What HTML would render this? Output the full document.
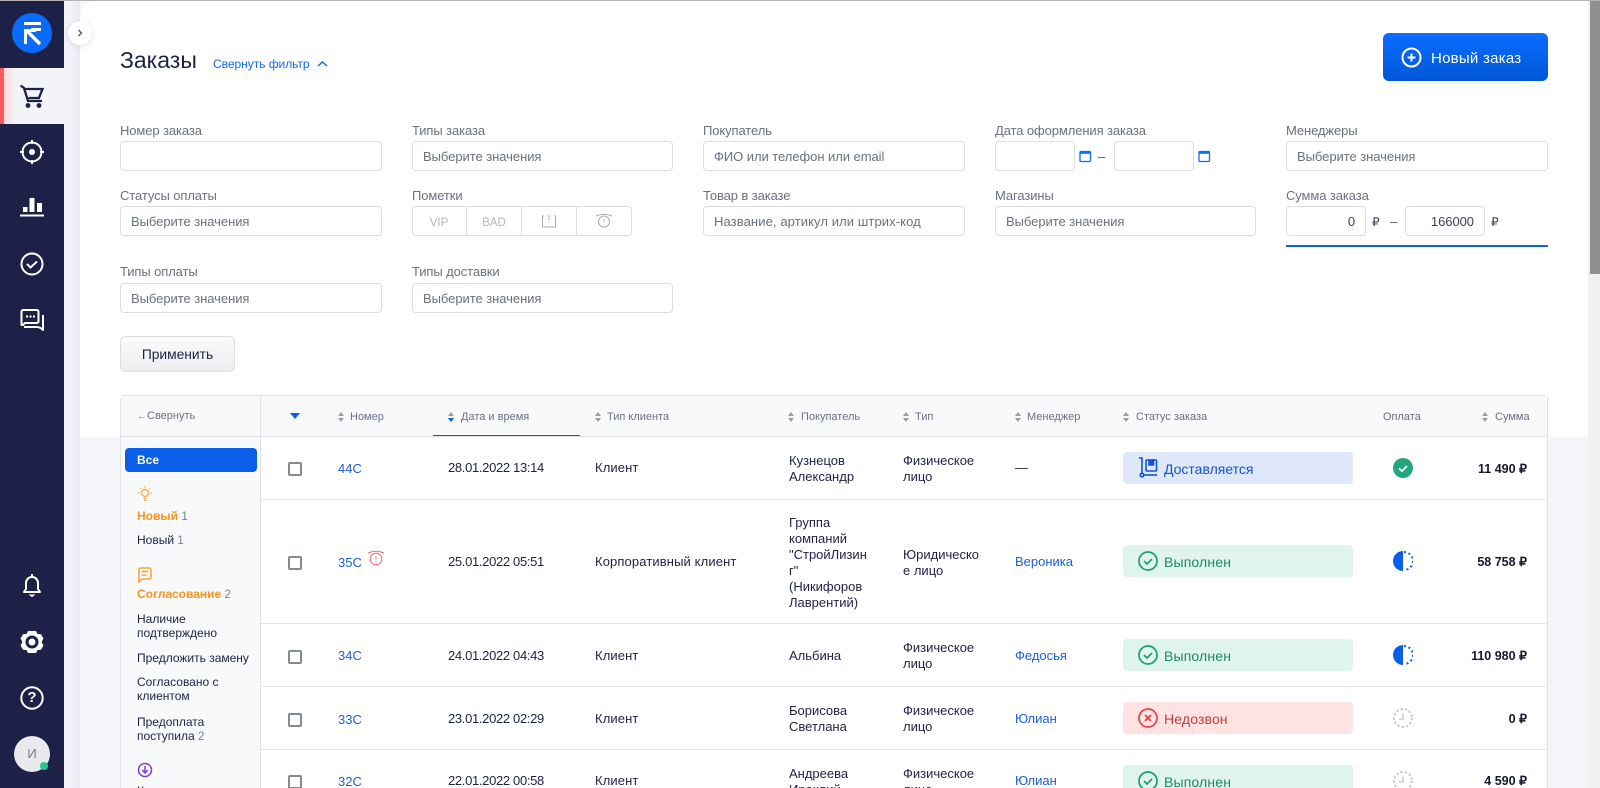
<!DOCTYPE html>
<html lang="ru"><head><meta charset="utf-8"><title>Заказы</title>
<style>
html,body{margin:0;padding:0;width:1600px;height:788px;overflow:hidden;background:#f4f5f8}
body{position:relative;font-family:"Liberation Sans",Arial,sans-serif;color:#1e2147}
.a,.t,.i,.l,.h,svg{position:absolute}
.t,.l,.h{white-space:nowrap;font-size:13px;line-height:16px}
.l{color:#6b7080;font-size:13px;letter-spacing:-.1px;margin-top:1px}
.i{box-sizing:border-box;background:#fff;border:1px solid #dcdde1;border-radius:4px;height:30px;font-size:13px;line-height:30px;padding-left:10px;color:#6b7080;white-space:nowrap;letter-spacing:-.05px}
.h{color:#6b7080;font-size:11px;top:409px}
.s{position:absolute;top:412px;width:6px;height:10px}
.s:before,.s:after{content:"";position:absolute;left:0;border-left:3px solid transparent;border-right:3px solid transparent}
.s:before{top:0;border-bottom:4px solid #9a9da8}
.s:after{bottom:0;border-top:4px solid #9a9da8}
.hr{position:absolute;left:261px;width:1287px;height:1px;background:#e2e3e8}
.cb{position:absolute;left:288px;width:14px;height:14px;box-sizing:border-box;border:2px solid #858896;border-radius:2px;background:#fff}
.lnk{color:#1d5fd8}
.d{letter-spacing:-.33px}
.c{letter-spacing:.12px}
.b{position:absolute;left:1123px;width:230px;height:32px;border-radius:4px;font-size:14px;line-height:34px;padding-left:41px;box-sizing:border-box;white-space:nowrap;letter-spacing:.15px}
.g{background:#dff5ec;color:#1b8a63}
.sum{position:absolute;right:73px;font-size:12.5px;font-weight:bold;color:#15172e;line-height:16px;white-space:nowrap}
.m{left:137px;font-size:12px;color:#1e2147;line-height:14px}
.m small{font-size:11.5px;color:#7b7f90}
.o{color:#f7941d;font-weight:bold;left:137px;font-size:12px;line-height:14px}
.o small{font-size:11.5px;color:#7b7f90;font-weight:normal}
</style></head><body>

<div class="a" style="left:0;top:0;width:1600px;height:1px;background:#b4b4b4;z-index:9"></div>
<div class="a" style="left:64px;top:0;width:16px;height:788px;background:linear-gradient(90deg,#f3f4f8 50%,#e9eaef)"></div>
<div class="a" style="left:80px;top:1px;width:1508px;height:436px;background:#fff;border-top-left-radius:14px"></div>
<div class="a" style="left:80px;top:437px;width:1508px;height:351px;background:#f4f5f8"></div>

<!-- sidebar -->
<div class="a" style="left:0;top:0;width:64px;height:788px;background:#1e2147"></div>
<div class="a" style="left:0;top:68px;width:64px;height:56px;background:#f3f4f8"></div>
<div class="a" style="left:0;top:68px;width:16px;height:56px;background:linear-gradient(90deg,#ff5a5a 25%,#ffd9dc 26%,#f3f4f8)"></div>
<svg style="left:0;top:0" width="64" height="788" viewBox="0 0 64 788" fill="none">
 <circle cx="32" cy="33" r="20" fill="#0a6cff"/>
 <path d="M24 22h17v3H24zM31 28h10v3H31z" fill="#fff"/>
 <path d="M24 44V29h12v3h-9v12z" fill="#fff"/><path d="M27 31l13 13" stroke="#fff" stroke-width="3.4"/>
 <path d="M20.500 85.500l3.500 2.500 4 13h14M25 89h17.500l-3.600 9H28.500" stroke="#1e2147" stroke-width="2.300"/>
 <circle cx="28" cy="105.500" r="2.400" fill="#1e2147"/><circle cx="39" cy="105.500" r="2.400" fill="#1e2147"/>
 <g stroke="#fff" stroke-width="2"><circle cx="32" cy="152" r="9.500"/><path d="M32 140v4M32 160v4M20 152h4M40 152h4"/></g><circle cx="32" cy="152" r="3" fill="#fff"/>
 <path d="M23 207h4.500v5H23zM29.500 198h5v14h-5zM37 203h5v9h-5zM20 214.500h24v2H20z" fill="#fff"/>
 <g stroke="#fff" stroke-width="2"><circle cx="32" cy="264" r="10.500"/><path d="M27.500 264.500l3 3 6-5.500" stroke-linecap="round"/>
 <path d="M23 325h-1.500v-13q0-2 2-2h13q2 0 2 2v9q0 2-2 2H25z" stroke-linejoin="round"/><path d="M24 327h13q3 0 6 3v-15" stroke-linejoin="round"/></g>
 <path d="M26 315.500h2v2h-2zM29.500 315.500h2v2h-2zM33 315.500h2v2h-2z" fill="#fff"/>
 <path d="M24 592h16l-2-3v-6a6 6 0 0 0-12 0v6z" stroke="#fff" stroke-width="2" stroke-linejoin="round"/><path d="M32 574v3" stroke="#fff" stroke-width="2"/><path d="M30 595h4l-2 1.500z" fill="#fff" stroke="#fff"/>
 <path d="M28 631h8l1.500 3 3.500.3 2.500 4.200-2 3.500 2 3.500-2.500 4.200-3.500.3-1.500 3h-8l-1.500-3-3.500-.3-2.500-4.200 2-3.500-2-3.500 2.500-4.200 3.500-.3z" fill="#fff"/><circle cx="32" cy="642" r="5" fill="#fff" stroke="#1e2147" stroke-width="3"/>
 <circle cx="32" cy="698" r="10.700" stroke="#fff" stroke-width="2"/>
 <circle cx="32" cy="754" r="18" fill="#e8eaee"/><circle cx="44" cy="766" r="4" fill="#22c993"/>
</svg>
<div class="t" style="left:26px;top:746px;width:12px;text-align:center;color:#77798a;font-size:13px">И</div>
<div class="t" style="left:26px;top:689px;width:12px;text-align:center;color:#fff;font-size:15px;font-weight:bold;line-height:18px">?</div>
<div class="a" style="left:68px;top:21px;width:24px;height:24px;border-radius:50%;background:#fff;box-shadow:0 1px 6px rgba(30,33,71,.15)"></div>
<svg style="left:76px;top:29px" width="8" height="8" fill="none"><path d="M2.500 1l3 3-3 3" stroke="#5d6070" stroke-width="1.500"/></svg>

<!-- header -->
<div class="t" style="left:120px;top:46px;font-size:23px;line-height:28px">Заказы</div>
<div class="t" style="left:213px;top:56px;font-size:12px;color:#1169f0;letter-spacing:-.03px">Свернуть фильтр</div>
<svg style="left:317px;top:60px" width="11" height="8" fill="none"><path d="M1 6l4.500-4 4.500 4" stroke="#1169f0" stroke-width="1.500"/></svg>
<div class="a" style="left:1383px;top:33px;width:165px;height:48px;border-radius:6px;background:linear-gradient(180deg,#0a6cff,#0058d6)"></div>
<svg style="left:1401px;top:47px" width="21" height="21" fill="none" stroke="#fff" stroke-width="2"><circle cx="10.500" cy="10.500" r="9"/><path d="M6.500 10.500h8M10.500 6.500v8"/></svg>
<div class="t" style="left:1431px;top:51px;font-size:15px;color:#fff;letter-spacing:.25px">Новый заказ</div>

<!-- filters -->
<div class="l" style="left:120px;top:122px">Номер заказа</div><div class="i" style="left:120px;top:141px;width:262px"></div>
<div class="l" style="left:412px;top:122px">Типы заказа</div><div class="i" style="left:412px;top:141px;width:261px">Выберите значения</div>
<div class="l" style="left:703px;top:122px">Покупатель</div><div class="i" style="left:703px;top:141px;width:262px">ФИО или телефон или email</div>
<div class="l" style="left:995px;top:122px">Дата оформления заказа</div><div class="i" style="left:995px;top:141px;width:80px"></div>
<svg style="left:1079px;top:149px" width="13" height="14" fill="none"><rect x="1" y="2.500" width="10.500" height="10" rx="1" stroke="#0a6cff" stroke-width="1.300"/><path d="M1 3h10.500v1.800H1z" fill="#0a6cff"/></svg>
<div class="t" style="left:1098px;top:149px;color:#555">–</div>
<div class="i" style="left:1114px;top:141px;width:80px"></div>
<svg style="left:1198px;top:149px" width="13" height="14" fill="none"><rect x="1" y="2.500" width="10.500" height="10" rx="1" stroke="#0a6cff" stroke-width="1.300"/><path d="M1 3h10.500v1.800H1z" fill="#0a6cff"/></svg>
<div class="l" style="left:1286px;top:122px">Менеджеры</div><div class="i" style="left:1286px;top:141px;width:262px">Выберите значения</div>

<div class="l" style="left:120px;top:187px">Статусы оплаты</div><div class="i" style="left:120px;top:206px;width:262px">Выберите значения</div>
<div class="l" style="left:412px;top:187px">Пометки</div>
<div class="a" style="left:412px;top:206px;width:220px;height:30px;box-sizing:border-box;border:1px solid #dcdde1;border-radius:4px"></div>
<div class="a" style="left:466px;top:207px;width:1px;height:28px;background:#dcdde1"></div>
<div class="a" style="left:521px;top:207px;width:1px;height:28px;background:#dcdde1"></div>
<div class="a" style="left:576px;top:207px;width:1px;height:28px;background:#dcdde1"></div>
<div class="t" style="left:412px;top:215px;width:54px;text-align:center;font-size:11.500px;color:#b3b5bd">VIP</div>
<div class="t" style="left:467px;top:215px;width:54px;text-align:center;font-size:11.500px;color:#b3b5bd">BAD</div>
<svg style="left:541px;top:214px" width="16" height="15" fill="none" stroke="#a9abb4"><path d="M3 2h-1.500v11h13v-11H13M5.500 2h.5M10 2h.5M8 1v5M8 7.500v1"/></svg>
<svg style="left:595px;top:213px" width="18" height="16" fill="none" stroke="#a9abb4"><path d="M1 3q8-3.500 16 0"/><circle cx="9" cy="8.500" r="5.500"/><path d="M9 6v3M9 10.500v1"/></svg>
<div class="l" style="left:703px;top:187px">Товар в заказе</div><div class="i" style="left:703px;top:206px;width:262px;letter-spacing:.1px">Название, артикул или штрих-код</div>
<div class="l" style="left:995px;top:187px">Магазины</div><div class="i" style="left:995px;top:206px;width:261px">Выберите значения</div>
<div class="l" style="left:1286px;top:187px">Сумма заказа</div>
<div class="i" style="left:1286px;top:206px;width:80px;text-align:right;padding:0 10px;color:#3a3d55">0</div>
<div class="t" style="left:1372px;top:214px;font-size:12px;color:#3a3d55">₽</div>
<div class="t" style="left:1390px;top:214px;color:#555">–</div>
<div class="i" style="left:1405px;top:206px;width:80px;text-align:right;padding:0 10px;color:#3a3d55">166000</div>
<div class="t" style="left:1491px;top:214px;font-size:12px;color:#3a3d55">₽</div>
<div class="a" style="left:1286px;top:245px;width:262px;height:2px;background:#0a63ea"></div>

<div class="l" style="left:120px;top:263px">Типы оплаты</div><div class="i" style="left:120px;top:283px;width:262px">Выберите значения</div>
<div class="l" style="left:412px;top:263px">Типы доставки</div><div class="i" style="left:412px;top:283px;width:261px">Выберите значения</div>
<div class="a" style="left:120px;top:336px;width:115px;height:36px;box-sizing:border-box;border:1px solid #dcdde1;border-radius:6px;background:linear-gradient(180deg,#fafbfc,#eceef1);font-size:13.800px;line-height:36px;text-align:center;color:#1e2147">Применить</div>

<!-- table -->
<div class="a" style="left:120px;top:395px;width:1428px;height:393px;box-sizing:border-box;border:1px solid #e0e1e6;border-bottom:0;border-radius:4px 4px 0 0;background:#fff"></div>
<div class="a" style="left:121px;top:396px;width:1426px;height:41px;background:#f8f9fb;border-bottom:1px solid #e0e1e6;box-sizing:border-box"></div>
<div class="a" style="left:121px;top:396px;width:139px;height:392px;background:#f8f9fb;border-right:1px solid #e0e1e6;box-sizing:content-box"></div>
<div class="a" style="left:121px;top:436px;width:139px;height:1px;background:#e0e1e6"></div>

<div class="t" style="left:137px;top:408px;font-size:9px;color:#6b7080">←</div><div class="t" style="left:147px;top:408px;font-size:11px;color:#6b7080">Свернуть</div>
<div class="a" style="left:290px;top:413px;border-left:5px solid transparent;border-right:5px solid transparent;border-top:6px solid #0a5fe8"></div>
<div class="s" style="left:338px"></div><div class="h" style="left:350px">Номер</div>
<div class="s" style="left:448px"></div><div class="a" style="left:448px;top:418px;border-left:3px solid transparent;border-right:3px solid transparent;border-top:4px solid #0a5fe8"></div><div class="h" style="left:461px">Дата и время</div>
<div class="a" style="left:433px;top:435px;width:147px;height:1px;background:#1b57c4"></div>
<div class="s" style="left:595px"></div><div class="h" style="left:607px">Тип клиента</div>
<div class="s" style="left:788px"></div><div class="h" style="left:801px">Покупатель</div>
<div class="s" style="left:903px"></div><div class="h" style="left:915px">Тип</div>
<div class="s" style="left:1015px"></div><div class="h" style="left:1027px">Менеджер</div>
<div class="s" style="left:1123px"></div><div class="h" style="left:1136px">Статус заказа</div>
<div class="h" style="left:1383px">Оплата</div>
<div class="s" style="left:1482px"></div><div class="h" style="left:1495px">Сумма</div>

<div class="hr" style="top:499px"></div><div class="hr" style="top:623px"></div><div class="hr" style="top:686px"></div><div class="hr" style="top:749px"></div>

<!-- left filter -->
<div class="a" style="left:125px;top:448px;width:132px;height:24px;border-radius:4px;background:#0a5fe8;color:#fff;font-size:12px;font-weight:bold;line-height:24px;padding-left:12px;box-sizing:border-box">Все</div>
<svg style="left:137px;top:486px" width="16" height="16" fill="none" stroke="#f9a63a"><circle cx="8" cy="7" r="3.500" stroke-width="1.300"/><path d="M6.500 12.500h3M7 14.500h2M8 0v1.500M1 7h1.500M13.500 7H15M3 2l1 1M13 2l-1 1" stroke-width="1.200"/></svg>
<div class="t o" style="top:509px">Новый <small>1</small></div>
<div class="t m" style="top:533px">Новый <small>1</small></div>
<svg style="left:137px;top:567px" width="16" height="16" fill="none" stroke="#f9a63a" stroke-width="1.600"><path d="M2 15V3q0-2 2-2h8q2 0 2 2v7q0 2-2 2H5z" stroke-linejoin="round"/><path d="M4.500 4.500h7M4.500 8h5"/></svg>
<div class="t o" style="top:587px">Согласование <small>2</small></div>
<div class="t m" style="top:612px">Наличие<br>подтверждено</div>
<div class="t m" style="top:651px">Предложить замену</div>
<div class="t m" style="top:675px">Согласовано с<br>клиентом</div>
<div class="t m" style="top:715px">Предоплата<br>поступила <small>2</small></div>
<svg style="left:137px;top:762px" width="16" height="16" fill="none" stroke="#7a3fd6" stroke-width="1.500"><circle cx="8" cy="8" r="6.500"/><path d="M8 4v6.500M5.300 8L8 11l2.700-3"/></svg>
<div class="t m" style="top:784px">Комплектуется</div>

<!-- rows -->
<div class="cb" style="top:462px"></div>
<div class="t lnk" style="left:338px;top:461px">44С</div>
<div class="t d" style="left:448px;top:460px">28.01.2022 13:14</div>
<div class="t c" style="left:595px;top:460px">Клиент</div>
<div class="t" style="left:789px;top:453px">Кузнецов<br>Александр</div>
<div class="t" style="left:903px;top:453px">Физическое<br>лицо</div>
<div class="t" style="left:1015px;top:460px">—</div>
<div class="b" style="top:452px;background:#dfe8fb;color:#1553c7;letter-spacing:0">Доставляется</div>
<svg style="left:1139px;top:457px" width="20" height="21" fill="none" stroke="#0f55d4" stroke-width="1.600"><path d="M0 1h3v15"/><circle cx="3" cy="18" r="1.800"/><path d="M5 18h13"/><rect x="7" y="3" width="10.500" height="11" rx="1"/><path d="M10 3h4.500v5H10z" fill="#0f55d4"/></svg>
<svg style="left:1393px;top:458px" width="20" height="20"><circle cx="10" cy="10" r="10" fill="#23a67a"/><path d="M6 10.500l3 2.500 5-5" fill="none" stroke="#fff" stroke-width="1.800"/></svg>
<div class="sum" style="top:461px">11 490 ₽</div>

<div class="cb" style="top:556px"></div>
<div class="t lnk" style="left:338px;top:555px">35С</div>
<svg style="left:367px;top:550px" width="18" height="17" fill="none" stroke="#ee6a6a"><path d="M1 3q8-3.500 16 0"/><circle cx="9" cy="9" r="5.800"/><path d="M9 6.500v3M9 11v1"/></svg>
<div class="t d" style="left:448px;top:554px">25.01.2022 05:51</div>
<div class="t c" style="left:595px;top:554px">Корпоративный клиент</div>
<div class="t" style="left:789px;top:515px">Группа<br>компаний<br>"СтройЛизин<br>г"<br>(Никифоров<br>Лаврентий)</div>
<div class="t" style="left:903px;top:547px">Юридическо<br>е лицо</div>
<div class="t lnk" style="left:1015px;top:554px">Вероника</div>
<div class="b g" style="top:545px">Выполнен</div>
<svg style="left:1138px;top:551px" width="20" height="20" fill="none" stroke="#1f9c72" stroke-width="1.700"><circle cx="10" cy="10" r="9"/><path d="M6 10l3 3 5-5"/></svg>
<svg style="left:1393px;top:551px" width="20" height="20"><path d="M10 0a10 10 0 0 0 0 20z" fill="#0a5fe8"/><path d="M11 1a9 9 0 0 1 0 18" fill="none" stroke="#0a5fe8" stroke-width="2" stroke-dasharray="2 2.700"/></svg>
<div class="sum" style="top:554px">58 758 ₽</div>

<div class="cb" style="top:650px"></div>
<div class="t lnk" style="left:338px;top:648px">34С</div>
<div class="t d" style="left:448px;top:648px">24.01.2022 04:43</div>
<div class="t c" style="left:595px;top:648px">Клиент</div>
<div class="t" style="left:789px;top:648px">Альбина</div>
<div class="t" style="left:903px;top:640px">Физическое<br>лицо</div>
<div class="t lnk" style="left:1015px;top:648px">Федосья</div>
<div class="b g" style="top:639px">Выполнен</div>
<svg style="left:1138px;top:645px" width="20" height="20" fill="none" stroke="#1f9c72" stroke-width="1.700"><circle cx="10" cy="10" r="9"/><path d="M6 10l3 3 5-5"/></svg>
<svg style="left:1393px;top:645px" width="20" height="20"><path d="M10 0a10 10 0 0 0 0 20z" fill="#0a5fe8"/><path d="M11 1a9 9 0 0 1 0 18" fill="none" stroke="#0a5fe8" stroke-width="2" stroke-dasharray="2 2.700"/></svg>
<div class="sum" style="top:648px">110 980 ₽</div>

<div class="cb" style="top:713px"></div>
<div class="t lnk" style="left:338px;top:712px">33С</div>
<div class="t d" style="left:448px;top:711px">23.01.2022 02:29</div>
<div class="t c" style="left:595px;top:711px">Клиент</div>
<div class="t" style="left:789px;top:703px">Борисова<br>Светлана</div>
<div class="t" style="left:903px;top:703px">Физическое<br>лицо</div>
<div class="t lnk" style="left:1015px;top:711px">Юлиан</div>
<div class="b" style="top:702px;background:#ffe3e2;color:#c43c3c">Недозвон</div>
<svg style="left:1138px;top:708px" width="20" height="20" fill="none" stroke="#e04545" stroke-width="1.700"><circle cx="10" cy="10" r="9"/><path d="M7 7l6 6M13 7l-6 6" stroke-width="1.900"/></svg>
<svg style="left:1393px;top:708px" width="20" height="20" fill="none" stroke="#c3c5ce" stroke-width="2"><circle cx="10" cy="10" r="9" stroke-dasharray="2.200 2.200"/><path d="M10 5.500V11H6" stroke-width="1.300"/></svg>
<div class="sum" style="top:711px">0 ₽</div>

<div class="cb" style="top:775px"></div>
<div class="t lnk" style="left:338px;top:774px">32С</div>
<div class="t d" style="left:448px;top:773px">22.01.2022 00:58</div>
<div class="t c" style="left:595px;top:773px">Клиент</div>
<div class="t" style="left:789px;top:766px">Андреева<br>Ираклий</div>
<div class="t" style="left:903px;top:766px">Физическое<br>лицо</div>
<div class="t lnk" style="left:1015px;top:773px">Юлиан</div>
<div class="b g" style="top:765px">Выполнен</div>
<svg style="left:1138px;top:771px" width="20" height="20" fill="none" stroke="#1f9c72" stroke-width="1.700"><circle cx="10" cy="10" r="9"/><path d="M6 10l3 3 5-5"/></svg>
<svg style="left:1393px;top:771px" width="20" height="20" fill="none" stroke="#c3c5ce" stroke-width="2"><circle cx="10" cy="10" r="9" stroke-dasharray="2.200 2.200"/><path d="M10 5.500V11H6" stroke-width="1.300"/></svg>
<div class="sum" style="top:773px">4 590 ₽</div>

<!-- scrollbar -->
<div class="a" style="left:1588px;top:1px;width:12px;height:787px;background:#f1f1f1"></div>
<div class="a" style="left:1590px;top:1px;width:10px;height:273px;background:#8f8f8f"></div>
</body></html>
